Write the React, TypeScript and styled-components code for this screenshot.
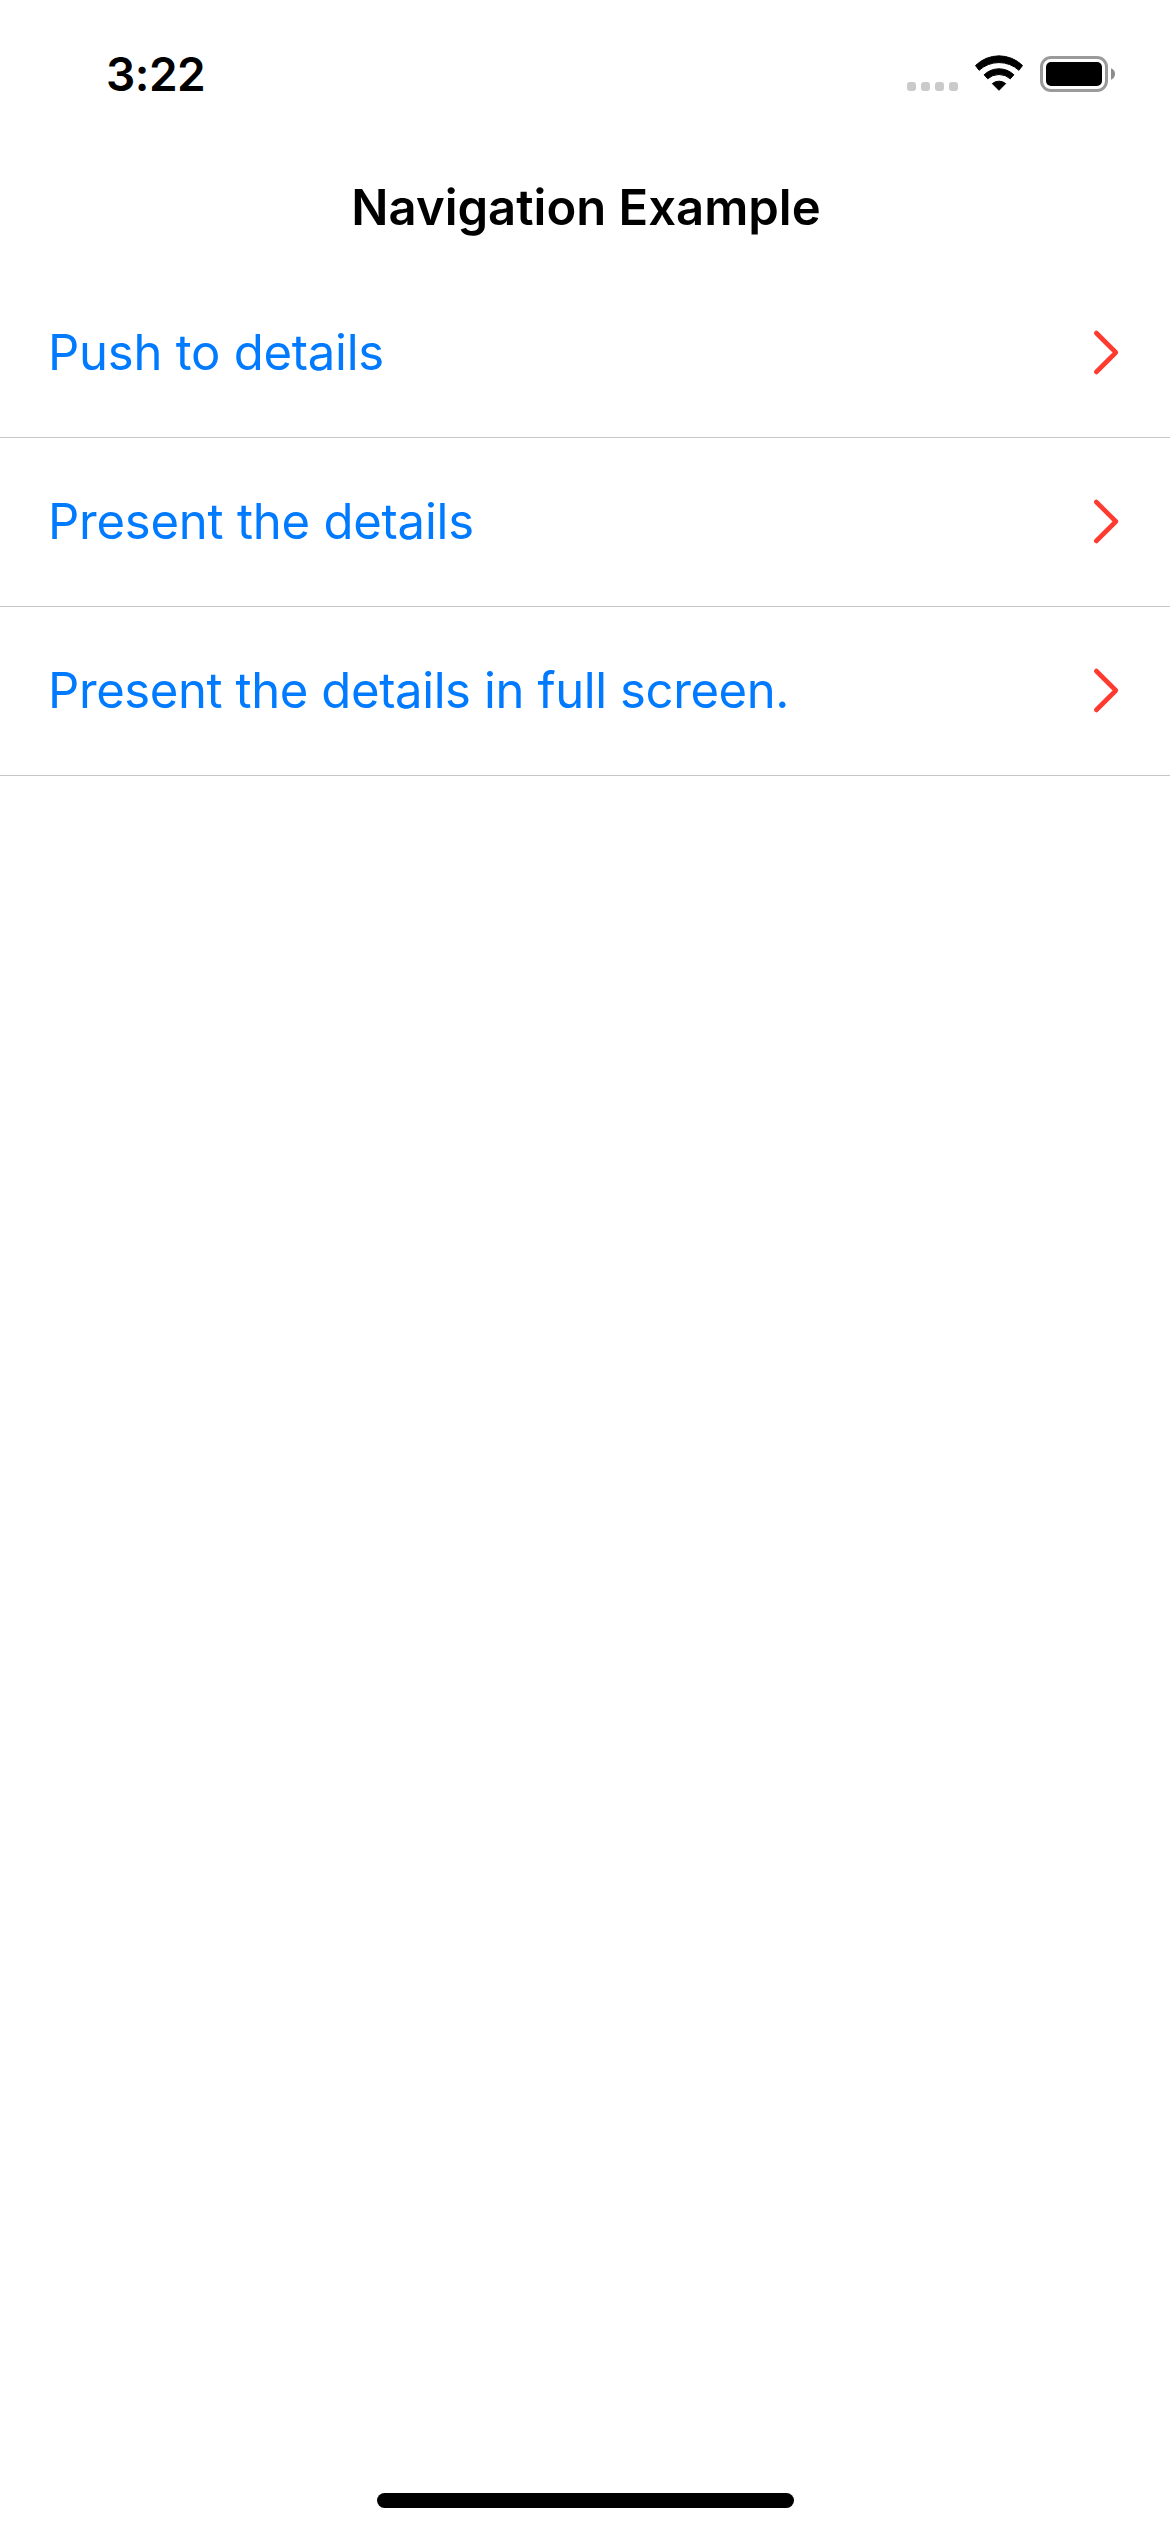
import React from "react";
import styled, { createGlobalStyle } from "styled-components";

const GlobalStyle = createGlobalStyle`
  *, *::before, *::after { box-sizing: border-box; }
  body {
    margin: 0;
    background: #fff;
    font-family: Inter, "Liberation Sans", sans-serif;
  }
`;

const Screen = styled.div`
  display: flex;
  flex-direction: column;
  height: 2532px;
  width: 1170px;
  background: #fff;
  overflow: hidden;
`;

const StatusBar = styled.header`
  display: flex;
  justify-content: space-between;
  height: 141px;
  padding: 46px 55px 0 106px;
`;

const Clock = styled.time`
  font-size: 46px;
  font-weight: 600;
  line-height: 56px;
  letter-spacing: -0.5px;
  color: #000;
`;

const StatusIcons = styled.div`
  display: flex;
  align-items: flex-start;
  padding-top: 8px;
`;

const SignalDots = styled.div`
  display: flex;
  gap: 5px;
  margin: 28px 16px 0 0;
`;

const Dot = styled.span`
  width: 9px;
  height: 9px;
  border-radius: 3px;
  background: #cacaca;
`;

const WifiGlyph = styled.svg`
  width: 50px;
  height: 38px;
  margin-right: 16px;
`;

const BatteryGlyph = styled.svg`
  width: 75px;
  height: 38px;
`;

const NavBar = styled.div`
  display: flex;
  justify-content: center;
  height: 128px;
  padding-top: 37px;
`;

const Title = styled.h1`
  margin: 0;
  padding-left: 2px;
  font-size: 49px;
  font-weight: 600;
  line-height: 59px;
  color: #000;
`;

const List = styled.ul`
  flex: 1;
  margin: 0;
  padding: 0;
  list-style: none;
`;

const Row = styled.li`
  display: flex;
  justify-content: space-between;
  height: 169px;
  padding: 54px 50px 0 48px;
  border-bottom: 1px solid #c6c6c8;
`;

const RowLabel = styled.span<{ $tracking: number }>`
  font-size: 49px;
  font-weight: 400;
  line-height: 59px;
  letter-spacing: ${(p) => p.$tracking}px;
  white-space: nowrap;
  color: #007aff;
`;

const ChevronGlyph = styled.svg`
  width: 28px;
  height: 59px;
`;

const HomeArea = styled.footer`
  display: flex;
  justify-content: center;
  height: 39px;
`;

const HomeIndicator = styled.div`
  width: 417px;
  height: 15px;
  border-radius: 8px;
  background: #000;
`;

const Wifi = () => (
  <WifiGlyph viewBox="0 0 50 38" fill="#000" stroke="#000" strokeWidth="1" strokeLinejoin="round">
    <path d="M1.5 11.5A33.5 33.5 0 0 1 48.5 11.5L44.9 16.3A29.5 29.5 0 0 0 5.1 16.3Z" />
    <path d="M10.1 20.8A21.5 21.5 0 0 1 39.9 20.8L36.3 24.8A17 17 0 0 0 13.7 24.8Z" />
    <path d="M18.3 29.6A10.5 10.5 0 0 1 31.7 29.6L25 36.3Z" />
  </WifiGlyph>
);

const Battery = () => (
  <BatteryGlyph viewBox="0 0 75 38">
    <rect x="1.5" y="3.5" width="65" height="33" rx="9.5" fill="none" stroke="#9a9a9a" strokeWidth="3" />
    <rect x="6" y="8" width="56" height="24" rx="5" fill="#000" />
    <path d="M71 14.3Q75 16 75 20Q75 24 71 25.7Z" fill="#8c8c8c" />
  </BatteryGlyph>
);

const Chevron = () => (
  <ChevronGlyph viewBox="0 0 28 59" fill="none" stroke="#ff3b30" strokeWidth="4.6" strokeLinecap="round" strokeLinejoin="round">
    <path d="M4.3 10L23.9 29.5L4.3 49" />
  </ChevronGlyph>
);

const items = [
  { label: "Push to details", tracking: -0.24 },
  { label: "Present the details", tracking: -0.22 },
  { label: "Present the details in full screen.", tracking: -0.39 },
];

export default function App() {
  return (
    <>
      <GlobalStyle />
      <Screen>
        <StatusBar>
          <Clock>3:22</Clock>
          <StatusIcons>
            <SignalDots>
              <Dot />
              <Dot />
              <Dot />
              <Dot />
            </SignalDots>
            <Wifi />
            <Battery />
          </StatusIcons>
        </StatusBar>
        <NavBar>
          <Title>Navigation Example</Title>
        </NavBar>
        <List>
          {items.map((item) => (
            <Row key={item.label}>
              <RowLabel $tracking={item.tracking}>{item.label}</RowLabel>
              <Chevron />
            </Row>
          ))}
        </List>
        <HomeArea>
          <HomeIndicator />
        </HomeArea>
      </Screen>
    </>
  );
}
